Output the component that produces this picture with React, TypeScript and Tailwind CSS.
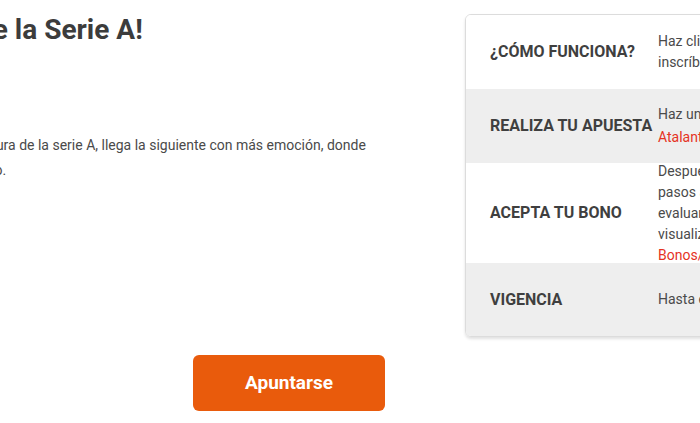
const font = { fontFamily: 'Roboto, "Noto Sans", sans-serif' };

type Step = {
  label: string;
  height: string;
  shaded: boolean;
  lines: { text: string; link?: boolean; gap?: boolean }[];
};

const steps: Step[] = [
  {
    label: '¿CÓMO FUNCIONA?',
    height: 'h-[74px]',
    shaded: false,
    lines: [
      { text: 'Haz clic en el botón Apuntarse e' },
      { text: 'inscríbete en la promoción.' },
    ],
  },
  {
    label: 'REALIZA TU APUESTA',
    height: 'h-[74px]',
    shaded: true,
    lines: [
      { text: 'Haz una apuesta en el partido' },
      { text: 'Atalanta vs Roma', link: true, gap: true },
    ],
  },
  {
    label: 'ACEPTA TU BONO',
    height: 'h-[100px]',
    shaded: false,
    lines: [
      { text: 'Después de completar los' },
      { text: 'pasos anteriores, se' },
      { text: 'evaluará tu apuesta y podrás' },
      { text: 'visualizar tu bono en Mi Cuenta >' },
      { text: 'Bonos/Promociones', link: true },
    ],
  },
  {
    label: 'VIGENCIA',
    height: 'h-[73px]',
    shaded: true,
    lines: [{ text: 'Hasta el domingo 23:59' }],
  },
];

function StepsTable() {
  return (
    <div className="self-start w-[420px] shrink-0 mt-[14px] rounded-[6px] border border-[#dcdcdc] overflow-hidden shadow-[0_2px_3px_rgba(0,0,0,0.12)]">
      {steps.map((s) => (
        <div
          key={s.label}
          className={`flex items-center ${s.height} ${s.shaded ? 'bg-[#eeeeee]' : 'bg-white'}`}
        >
          <div className="w-[192px] shrink-0 pl-6 text-[16px] font-bold text-[#3f3f3f] whitespace-nowrap">
            {s.label}
          </div>
          <div className="flex flex-col text-[14px] leading-[21px] text-[#4a4a4a] whitespace-nowrap">
            {s.lines.map((l) => (
              <span
                key={l.text}
                className={`${l.link ? 'text-[#e5321f]' : ''} ${l.gap ? 'mt-[2px]' : ''}`}
              >
                {l.text}
              </span>
            ))}
          </div>
        </div>
      ))}
    </div>
  );
}

export default function App() {
  return (
    <div className="w-[700px] h-[423px] overflow-hidden bg-white" style={font}>
      <div className="flex gap-[27px] -ml-[151px]">
        <div className="w-[589px] shrink-0 flex flex-col">
          <h1 className="-ml-[13px] mt-[12px] text-[28px] leading-[36px] font-bold text-[#3c3c3c] whitespace-nowrap">
            ¡Jornada 2 de la Serie A!
          </h1>
          <div className="mt-[85px] text-[14px] leading-[25px] text-[#4a4a4a] whitespace-nowrap flex flex-col">
            <span>Tras la jornada de apertura de la serie A, llega la siguiente con más emoción, donde</span>
            <span>recibirás un bono seguro.</span>
          </div>
          <button
            type="button"
            className="ml-[344px] mt-[172px] w-[192px] h-[56px] rounded-[6px] bg-[#e95b0c] text-white text-[19px] font-bold"
          >
            Apuntarse
          </button>
        </div>
        <StepsTable />
      </div>
    </div>
  );
}
